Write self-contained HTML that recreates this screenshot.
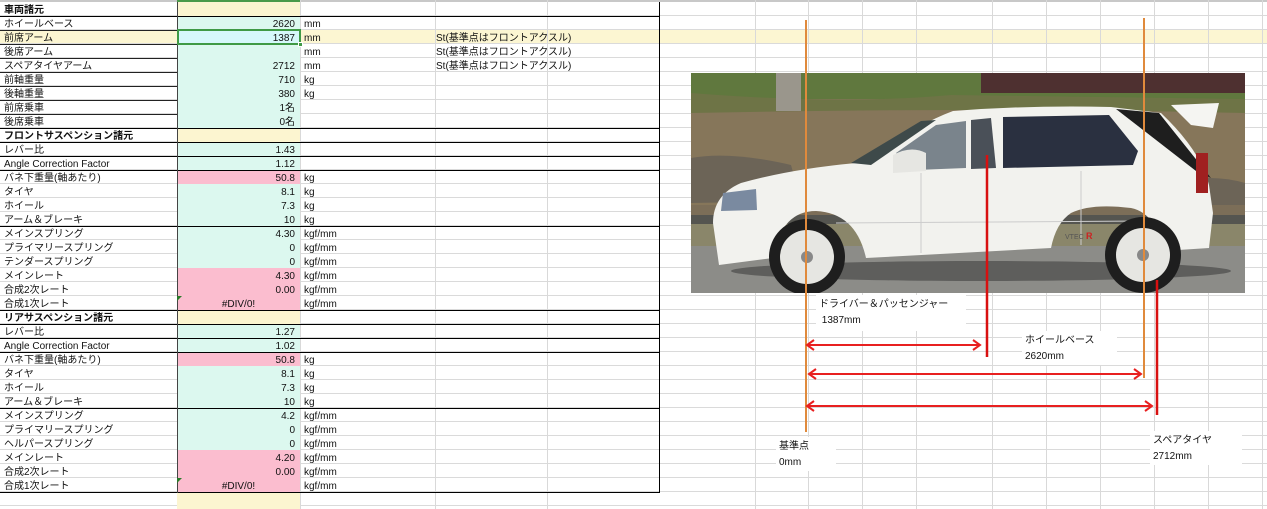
<!DOCTYPE html>
<html><head><meta charset="utf-8">
<style>
*{margin:0;padding:0;box-sizing:border-box}
body{width:1267px;height:509px;overflow:hidden;background:#fff;position:relative;font-family:"Liberation Sans","Noto Sans CJK JP",sans-serif;font-size:10px;color:#111}
.vl{position:absolute;top:0;width:1px;height:509px;background:#d9d9d9}
.row{position:absolute;left:0;width:660px;height:14px;line-height:17px;white-space:nowrap}
.a{position:absolute;left:4px;top:0}
.b{position:absolute;left:177px;width:123px;height:14px;text-align:right;padding-right:5px;background:#dcf8ef}
.y{background:#fcf5d0}
.p{background:#fbbdcf}
.c{position:absolute;left:304px;top:0}
.d{position:absolute;left:436px;top:0}
.bold{font-weight:bold}
.k{position:absolute;left:0;width:660px;height:1px;background:#000}
.ka{position:absolute;left:0;width:177px;height:1px;background:#222}
.lbl{position:absolute;background:#fff;font-size:10px;line-height:16px;padding:2px 3px 0}
</style></head><body>
<div style="position:absolute;left:0;top:0;width:1267px;height:2px;background:#c8c8c8"></div>
<div style="position:absolute;left:0;top:30px;width:1267px;height:14px;background:#fcf6d2"></div>
<div style="position:absolute;left:0;top:2px;width:1267px;height:507px;background:repeating-linear-gradient(to bottom,transparent 0,transparent 13px,#dadada 13px,#dadada 14px)"></div>
<div class="vl" style="left:177px"></div><div class="vl" style="left:300px"></div>
<div class="vl" style="left:435px"></div><div class="vl" style="left:547px"></div>
<div class="vl" style="left:755px"></div><div class="vl" style="left:808px"></div><div class="vl" style="left:862px"></div><div class="vl" style="left:916px"></div><div class="vl" style="left:992px"></div><div class="vl" style="left:1046px"></div><div class="vl" style="left:1100px"></div><div class="vl" style="left:1154px"></div><div class="vl" style="left:1208px"></div><div class="vl" style="left:1262px"></div>
<div style="position:absolute;left:177px;top:493px;width:123px;height:16px;background:#fcf5d0"></div>
<div style="position:absolute;left:177px;top:0;width:123px;height:2px;background:#4a9a4a"></div>

<div class="row" style="top:2px"><span class="a bold">車両諸元</span><span class="b y"></span></div>
<div class="row" style="top:16px"><span class="a">ホイールベース</span><span class="b">2620</span><span class="c">mm</span></div>
<div class="row" style="top:30px"><span class="a">前席アーム</span><span class="b" style="background:#d6f8fb">1387</span><span class="c">mm</span><span class="d">St(基準点はフロントアクスル)</span></div>
<div class="row" style="top:44px"><span class="a">後席アーム</span><span class="b"></span><span class="c">mm</span><span class="d">St(基準点はフロントアクスル)</span></div>
<div class="row" style="top:58px"><span class="a">スペアタイヤアーム</span><span class="b">2712</span><span class="c">mm</span><span class="d">St(基準点はフロントアクスル)</span></div>
<div class="row" style="top:72px"><span class="a">前軸重量</span><span class="b">710</span><span class="c">kg</span></div>
<div class="row" style="top:86px"><span class="a">後軸重量</span><span class="b">380</span><span class="c">kg</span></div>
<div class="row" style="top:100px"><span class="a">前席乗車</span><span class="b">1名</span></div>
<div class="row" style="top:114px"><span class="a">後席乗車</span><span class="b">0名</span></div>
<div class="row" style="top:128px"><span class="a bold">フロントサスペンション諸元</span><span class="b y"></span></div>
<div class="row" style="top:142px"><span class="a">レバー比</span><span class="b">1.43</span></div>
<div class="row" style="top:156px"><span class="a">Angle Correction Factor</span><span class="b">1.12</span></div>
<div class="row" style="top:170px"><span class="a">バネ下重量(軸あたり)</span><span class="b p">50.8</span><span class="c">kg</span></div>
<div class="row" style="top:184px"><span class="a">タイヤ</span><span class="b">8.1</span><span class="c">kg</span></div>
<div class="row" style="top:198px"><span class="a">ホイール</span><span class="b">7.3</span><span class="c">kg</span></div>
<div class="row" style="top:212px"><span class="a">アーム＆ブレーキ</span><span class="b">10</span><span class="c">kg</span></div>
<div class="row" style="top:226px"><span class="a">メインスプリング</span><span class="b">4.30</span><span class="c">kgf/mm</span></div>
<div class="row" style="top:240px"><span class="a">プライマリースプリング</span><span class="b">0</span><span class="c">kgf/mm</span></div>
<div class="row" style="top:254px"><span class="a">テンダースプリング</span><span class="b">0</span><span class="c">kgf/mm</span></div>
<div class="row" style="top:268px"><span class="a">メインレート</span><span class="b p">4.30</span><span class="c">kgf/mm</span></div>
<div class="row" style="top:282px"><span class="a">合成2次レート</span><span class="b p">0.00</span><span class="c">kgf/mm</span></div>
<div class="row" style="top:296px"><span class="a">合成1次レート</span><span class="b p" style="text-align:center;padding:0">#DIV/0!</span><span class="c">kgf/mm</span></div>
<div class="row" style="top:310px"><span class="a bold">リアサスペンション諸元</span><span class="b y"></span></div>
<div class="row" style="top:324px"><span class="a">レバー比</span><span class="b">1.27</span></div>
<div class="row" style="top:338px"><span class="a">Angle Correction Factor</span><span class="b">1.02</span></div>
<div class="row" style="top:352px"><span class="a">バネ下重量(軸あたり)</span><span class="b p">50.8</span><span class="c">kg</span></div>
<div class="row" style="top:366px"><span class="a">タイヤ</span><span class="b">8.1</span><span class="c">kg</span></div>
<div class="row" style="top:380px"><span class="a">ホイール</span><span class="b">7.3</span><span class="c">kg</span></div>
<div class="row" style="top:394px"><span class="a">アーム＆ブレーキ</span><span class="b">10</span><span class="c">kg</span></div>
<div class="row" style="top:408px"><span class="a">メインスプリング</span><span class="b">4.2</span><span class="c">kgf/mm</span></div>
<div class="row" style="top:422px"><span class="a">プライマリースプリング</span><span class="b">0</span><span class="c">kgf/mm</span></div>
<div class="row" style="top:436px"><span class="a">ヘルパースプリング</span><span class="b">0</span><span class="c">kgf/mm</span></div>
<div class="row" style="top:450px"><span class="a">メインレート</span><span class="b p">4.20</span><span class="c">kgf/mm</span></div>
<div class="row" style="top:464px"><span class="a">合成2次レート</span><span class="b p">0.00</span><span class="c">kgf/mm</span></div>
<div class="row" style="top:478px"><span class="a">合成1次レート</span><span class="b p" style="text-align:center;padding:0">#DIV/0!</span><span class="c">kgf/mm</span></div>

<div class="ka" style="top:30px"></div><div class="ka" style="top:44px"></div><div class="ka" style="top:58px"></div><div class="ka" style="top:72px"></div><div class="ka" style="top:86px"></div><div class="ka" style="top:100px"></div><div class="ka" style="top:114px"></div>
<div class="k" style="top:16px"></div><div class="k" style="top:128px"></div><div class="k" style="top:142px"></div><div class="k" style="top:156px"></div><div class="k" style="top:170px"></div><div class="k" style="top:226px"></div><div class="k" style="top:310px"></div><div class="k" style="top:324px"></div><div class="k" style="top:338px"></div><div class="k" style="top:352px"></div><div class="k" style="top:408px"></div><div class="k" style="top:492px"></div>
<div style="position:absolute;left:177px;top:2px;width:1px;height:491px;background:#444"></div>
<div style="position:absolute;left:659px;top:2px;width:1px;height:491px;background:#000"></div>
<div style="position:absolute;left:177px;top:29px;width:124px;height:16px;border:2px solid #3f9a46"></div>
<div style="position:absolute;left:298px;top:42px;width:5px;height:5px;background:#3f9a46;border:1px solid #fff"></div>
<div style="position:absolute;left:177px;top:296px;width:0;height:0;border-top:5px solid #2a7a2a;border-right:5px solid transparent"></div>
<div style="position:absolute;left:177px;top:478px;width:0;height:0;border-top:5px solid #2a7a2a;border-right:5px solid transparent"></div>

<svg style="position:absolute;left:691px;top:73px" width="554" height="220" viewBox="0 0 554 220">
<rect width="554" height="220" fill="#86765a"/>
<rect width="554" height="26" fill="#60783e"/>
<rect x="290" width="264" height="20" fill="#4e3030"/>
<path d="M0 20 Q150 32 260 22 L554 26 L554 40 Q300 34 0 40Z" fill="#6e7446"/>
<rect x="85" y="0" width="25" height="38" fill="#9a968c"/>
<path d="M0 85 Q40 78 100 92 L110 128 L0 130Z" fill="#6c6457"/>
<path d="M480 110 Q520 100 554 110 L554 140 L470 140Z" fill="#6c6457"/>
<rect x="0" y="132" width="554" height="12" fill="#7c6e58"/>
<rect x="0" y="142" width="554" height="9" fill="#555550"/>
<rect x="0" y="151" width="554" height="22" fill="#8a866a"/>
<rect x="0" y="173" width="554" height="47" fill="#8c8c88"/>
<ellipse cx="290" cy="198" rx="250" ry="10" fill="#5e5e5c"/>
<path d="M22 150 Q22 122 50 110 Q100 96 165 90 L205 68 Q235 48 262 38 Q340 32 420 34 L470 40 Q510 78 518 112 L522 140 L518 175 L472 178 Q465 140 440 135 Q400 130 380 140 Q365 150 360 175 L175 185 Q165 140 125 138 Q90 138 82 185 L28 192 Z" fill="#f2f2ee"/>
<path d="M205 80 L245 52 L275 48 L275 95 L225 97 Z" fill="#7a848c"/>
<path d="M280 47 L300 45 L305 95 L280 96 Z" fill="#4a5058"/>
<path d="M312 44 L418 42 L447 78 L442 92 L312 95 Z" fill="#2a3040"/>
<path d="M160 90 L230 48 L245 47 L180 92Z" fill="#3e4a4a"/>
<path d="M425 36 L468 40 L520 105 L505 98 Z" fill="#1e1e1e"/>
<path d="M480 32 L528 30 L522 55 L500 52 Z" fill="#f5f5f2"/>
<rect x="505" y="80" width="12" height="40" fill="#a02020"/>
<path d="M32 120 L65 116 L66 137 L30 138Z" fill="#7a8aa0"/>
<path d="M202 82 Q220 72 235 80 L235 98 L202 100Z" fill="#e6e6e2"/>
<line x1="145" y1="150" x2="460" y2="148" stroke="#ccc" stroke-width="1"/>
<line x1="230" y1="100" x2="230" y2="180" stroke="#ccc" stroke-width="1"/>
<line x1="390" y1="98" x2="390" y2="172" stroke="#ccc" stroke-width="1"/>
<circle cx="116" cy="184" r="38" fill="#1e1e1e"/>
<circle cx="116" cy="184" r="27" fill="#e6e6e2"/>
<circle cx="116" cy="184" r="6" fill="#888"/>
<circle cx="452" cy="182" r="38" fill="#1e1e1e"/>
<circle cx="452" cy="182" r="27" fill="#e6e6e2"/>
<circle cx="452" cy="182" r="6" fill="#888"/>
<text x="374" y="166" font-size="7" fill="#555" font-family="Liberation Sans">VTEC</text><text x="395" y="166" font-size="9" fill="#c22" font-weight="bold" font-family="Liberation Sans">R</text>
</svg>

<svg style="position:absolute;left:0;top:0" width="1267" height="509">
<line x1="806" y1="20" x2="806" y2="432" stroke="#e08a3c" stroke-width="2"/>
<line x1="1144" y1="18" x2="1144" y2="378" stroke="#e08a3c" stroke-width="2"/>
<line x1="987" y1="155" x2="987" y2="357" stroke="#d81010" stroke-width="2.5"/>
<line x1="1157" y1="280" x2="1157" y2="415" stroke="#d81010" stroke-width="2.5"/>
<g stroke="#e82020" stroke-width="2" fill="none">
<line x1="807" y1="345" x2="980" y2="345"/><polyline points="814,340 807,345 814,350"/><polyline points="973,340 980,345 973,350"/>
<line x1="809" y1="374" x2="1141" y2="374"/><polyline points="816,369 809,374 816,379"/><polyline points="1134,369 1141,374 1134,379"/>
<line x1="807" y1="406" x2="1152" y2="406"/><polyline points="814,401 807,406 814,411"/><polyline points="1145,401 1152,406 1145,411"/>
</g>
</svg>
<div class="lbl" style="left:816px;top:295px;width:150px;height:36px">ドライバー＆パッセンジャー<br>&nbsp;1387mm</div>
<div class="lbl" style="left:1022px;top:331px;width:95px;height:34px">ホイールベース<br>2620mm</div>
<div class="lbl" style="left:776px;top:437px;width:60px;height:34px">基準点<br>0mm</div>
<div class="lbl" style="left:1150px;top:431px;width:92px;height:34px">スペアタイヤ<br>2712mm</div>
</body></html>
